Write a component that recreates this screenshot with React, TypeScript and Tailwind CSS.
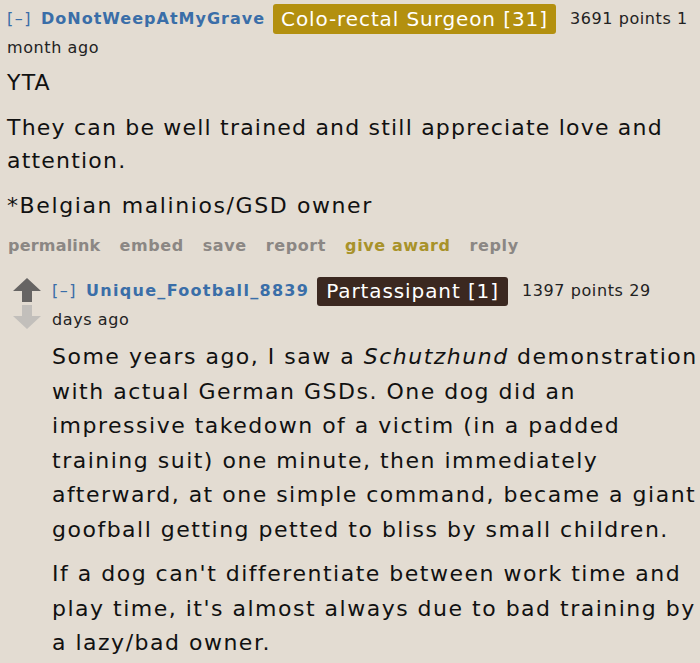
const font = { fontFamily: '"DejaVu Sans", Verdana, sans-serif' }

function Arrows() {
  return (
    <div className="flex flex-col items-center w-[30px] pt-[1px] gap-[3px]">
      <svg width="28" height="24" viewBox="0 0 28 24">
        <path d="M14 0 L28 13 L19 13 L19 24 L9 24 L9 13 L0 13 Z" fill="#666463" />
      </svg>
      <svg width="28" height="24" viewBox="0 0 28 24">
        <path d="M9 0 L19 0 L19 11 L28 11 L14 24 L0 11 L9 11 Z" fill="#c2bfbb" />
      </svg>
    </div>
  )
}

export default function App() {
  return (
    <div className="w-[700px] h-[663px] overflow-hidden bg-[#e3dcd2] text-[#111]" style={font}>
      {/* top comment */}
      <div className="pl-[7px] pr-[4px]">
        <div className="text-[16px] leading-[27px] pt-[4px] tracking-[1px]">
          <span className="text-[#3a6ea8] mr-[9px] tracking-[1.5px]">[–]</span>
          <span className="text-[#3a6ea8] font-bold mr-[8px]">DoNotWeepAtMyGrave</span>
          <span className="inline-block bg-[#b3900f] text-white text-[20px] leading-[30px] px-[8px] tracking-[0.9px] rounded-[3px] mr-[14px] align-middle">
            Colo-rectal Surgeon [31]
          </span>
          <span className="text-[#222] tracking-[0.6px]">3691 points 1 month ago</span>
        </div>
        <div className="text-[22px] leading-[33px] mt-[5px] tracking-[1.2px]">
          <p className="mb-[12px]">YTA</p>
          <p className="mb-[12px]">They can be well trained and still appreciate love and attention.</p>
          <p className="tracking-[1.6px]">*Belgian malinios/GSD owner</p>
        </div>
        <div className="flex gap-[19px] text-[16px] font-bold text-[#8b8784] mt-[12px] pl-[1px] tracking-[0.6px]">
          <span className="tracking-[0.2px]">permalink</span>
          <span>embed</span>
          <span>save</span>
          <span>report</span>
          <span className="text-[#a8922a]">give award</span>
          <span>reply</span>
        </div>
      </div>
      {/* reply */}
      <div className="flex pl-[12px] mt-[19px]">
        <Arrows />
        <div className="flex-1 pl-[10px]">
          <div className="text-[16px] leading-[27px] tracking-[1px] pr-[20px]">
            <span className="text-[#3a6ea8] mr-[9px] tracking-[1.5px]">[–]</span>
            <span className="text-[#3a6ea8] font-bold mr-[8px] tracking-[1.3px]">Unique_Football_8839</span>
            <span className="inline-block bg-[#3b2820] text-white text-[20px] leading-[29px] px-[9px] tracking-[0.9px] rounded-[3px] mr-[14px] align-middle">
              Partassipant [1]
            </span>
            <span className="text-[#222] tracking-[0.6px]">1397 points 29 days ago</span>
          </div>
          <div className="text-[22px] leading-[34.5px] mt-[7px] tracking-[1.5px]">
            <p className="mb-[10px]">
              Some years ago, I saw a <em>Schutzhund</em> demonstration with actual German GSDs. One dog did an
              impressive takedown of a victim (in a padded training suit) one minute, then immediately afterward,
              at one simple command, became a giant goofball getting petted to bliss by small children.
            </p>
            <p>
              If a dog can't differentiate between work time and play time, it's almost always due to bad training
              by a lazy/bad owner.
            </p>
          </div>
        </div>
      </div>
    </div>
  )
}
